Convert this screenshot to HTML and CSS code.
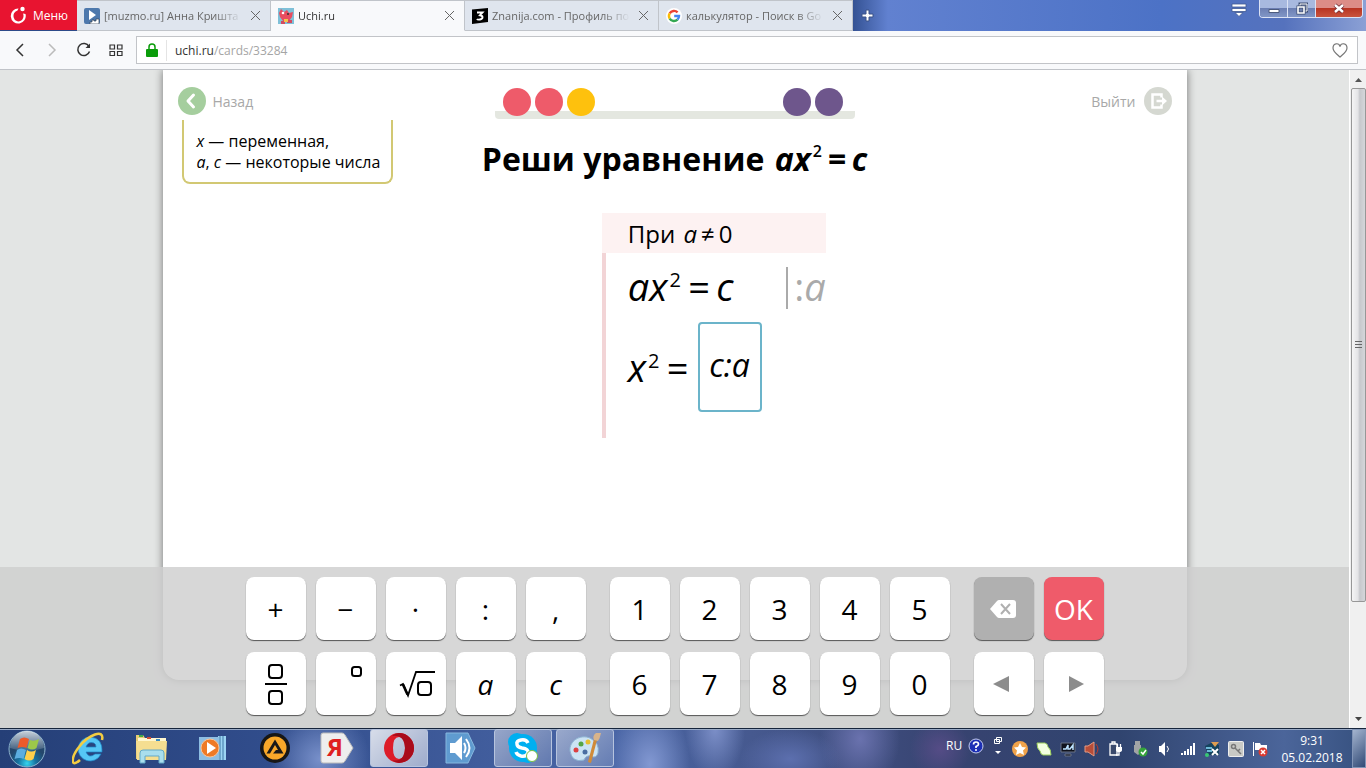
FILE: index.html
```html
<!DOCTYPE html>
<html lang="ru">
  <head>
    <meta charset="UTF-8" />
    <meta name="viewport" content="width=device-width, initial-scale=1.0" />
    <title>Uchi.ru</title>
    <link rel="stylesheet" href="styles.css">
  </head>
  <body>
    <header class="tab-bar">
      <button class="menu-btn">
        <svg width="18" height="18" viewBox="0 0 18 18"><path d="M9.500 2.500A7.500 7.500 0 1 0 16.500 8L14 7.500A5 5.500 0 1 1 8.500 4.500Z" fill="#fff"/><circle cx="13.500" cy="3" r="2.200" fill="#fff"/></svg>
        Меню
      </button>
      <div class="tab">
        <svg width="16" height="16" viewBox="0 0 16 16"><rect width="16" height="16" rx="2" fill="#4d78ac"/><path d="M5 2l7 5-7 5z" fill="#fff"/><path d="M6 16v-2h2v-2h2v1h2v-2h3v5z" fill="#fff" stroke="#345" stroke-width=".7"/></svg>
        <a href="#" class="tab-title">[muzmo.ru] Анна Кришта</a>
        <button class="tab-close" aria-label="Закрыть"><svg width="11" height="11" viewBox="0 0 11 11"><path d="M1 1l9 9M10 1L1 10"/></svg></button>
      </div>
      <div class="tab active">
        <svg width="16" height="16" viewBox="0 0 16 16"><rect width="16" height="16" fill="#7fc0d8"/><path d="M1 5l2-4 3 3 3-2 2 3 4-1-1 5-3 4H5L2 9z" fill="#e84c5f"/><path d="M3 13h4v3H3zM9 12h5v3H9z" fill="#d34b61"/><path d="M6 11h4v3H6z" fill="#f4c34c"/><circle cx="5" cy="5" r="1.300" fill="#fff"/><circle cx="10" cy="6" r="1" fill="#333"/></svg>
        <a href="#" class="tab-title">Uchi.ru</a>
        <button class="tab-close" aria-label="Закрыть"><svg width="11" height="11" viewBox="0 0 11 11"><path d="M1 1l9 9M10 1L1 10"/></svg></button>
      </div>
      <div class="tab">
        <svg width="16" height="16" viewBox="0 0 16 16"><path d="M0 1.500L16 0v14L0 16z" fill="#000"/><path d="M5 4.500h5.500L8 7.200Q10.500 7.500 10.500 9.300T8 11.500 5 11" fill="none" stroke="#fff" stroke-width="1.900"/></svg>
        <a href="#" class="tab-title">Znanija.com - Профиль по</a>
        <button class="tab-close" aria-label="Закрыть"><svg width="11" height="11" viewBox="0 0 11 11"><path d="M1 1l9 9M10 1L1 10"/></svg></button>
      </div>
      <div class="tab">
        <svg width="16" height="16" viewBox="0 0 16 16"><circle cx="8" cy="8" r="8" fill="#fff"/><g fill="none" stroke-width="2.400"><path d="M3.700 5.400A5 5 0 0 1 11.600 4.400" stroke="#ea4335"/><path d="M3.700 10.600a5 5 0 0 1 0-5.200" stroke="#fbbc05"/><path d="M11.500 11.600a5 5 0 0 1-7.800-1" stroke="#34a853"/><path d="M8.200 8H13a5 5 0 0 1-1.500 3.600" stroke="#4285f4"/></g></svg>
        <a href="#" class="tab-title">калькулятор - Поиск в Go</a>
        <button class="tab-close" aria-label="Закрыть"><svg width="11" height="11" viewBox="0 0 11 11"><path d="M1 1l9 9M10 1L1 10"/></svg></button>
      </div>
      <button class="new-tab" aria-label="Новая вкладка"><svg width="13" height="13" viewBox="0 0 13 13"><path d="M5 1h3v4h4v3H8v4H5V8H1V5h4z" fill="#fff" stroke="#3b5388"/></svg></button>
      <button class="tab-list" aria-label="Список вкладок"><svg width="16" height="14" viewBox="0 0 16 14"><path d="M1 1h14v3H1zM1 5.500h14v3H1zM4 9.500h8L8 13.500z" fill="#fff" stroke="#3f5892" stroke-width=".8"/></svg></button>
      <div class="window-buttons">
        <button aria-label="Свернуть"><svg width="12" height="14" viewBox="0 0 12 14"><path d="M1 7.500h10v3H1z" fill="#fff" stroke="#4c5b7e"/></svg></button>
        <button aria-label="Развернуть"><svg width="12" height="14" viewBox="0 0 12 14"><path d="M4 2h7v7H4z" fill="none" stroke="#3f4f72" stroke-width="3"/><path d="M4 2h7v7H4z" fill="none" stroke="#fff"/><path d="M2 5h6v6H2z" fill="#6e80ae" stroke="#3f4f72" stroke-width="3"/><path d="M2 5h6v6H2z" fill="none" stroke="#fff" stroke-width="1.600"/></svg></button>
        <button class="win-close" aria-label="Закрыть окно"><svg width="12" height="14" viewBox="0 0 12 14"><path d="M2 3l8 7M10 3l-8 7" stroke="#6b2730" stroke-width="4"/><path d="M2 3l8 7M10 3l-8 7" stroke="#fff" stroke-width="2.500"/></svg></button>
      </div>
    </header>

    <nav class="toolbar">
      <button class="tool" aria-label="Назад"><svg width="16" height="16" viewBox="0 0 16 16"><path d="M11 2L5 8l6 6" stroke="#333"/></svg></button>
      <button class="tool" aria-label="Вперёд"><svg width="16" height="16" viewBox="0 0 16 16"><path d="M5 2l6 6-6 6" stroke="#bbb"/></svg></button>
      <button class="tool" aria-label="Обновить"><svg width="16" height="16" viewBox="0 0 16 16"><path d="M13 4.500A6 6 0 1 0 13.500 9.500" stroke="#333"/><path d="M14 1.500v4.500H9.500z" fill="#333"/></svg></button>
      <button class="tool" aria-label="Экспресс-панель"><svg width="16" height="16" viewBox="0 0 16 16"><path d="M2 3h4.500v4H2zM9.500 3H14v4H9.500zM2 9.500h4.500v4H2zM9.500 9.500H14v4H9.500z" stroke="#333" stroke-width="1.200"/></svg></button>
      <div class="address">
        <svg class="lock" width="12" height="14" viewBox="0 0 12 14"><path d="M3 7V4a3 3 0 0 1 6 0v3" fill="none" stroke="#0a9c0a" stroke-width="1.500"/><rect x="0" y="6" width="12" height="8" rx="1" fill="#0a9c0a"/></svg>
        <label for="path">uchi.ru</label>
        <input id="path" type="text" value="/cards/33284" />
        <button class="heart" aria-label="В закладки"><svg width="16" height="15" viewBox="0 0 16 15"><path d="M8 3.500C7-.5 1-.2 1 5c0 4 5 7 7 9 2-2 7-5 7-9 0-5.200-6-5.500-7-1.500z" fill="none" stroke="#777" stroke-width="1.200"/></svg></button>
      </div>
    </nav>

    <main class="page">
      <div class="viewport">
        <section class="card">
          <div class="card-top">
            <a href="#" class="nav-link">
              <svg width="28" height="28" viewBox="0 0 28 28"><circle cx="14" cy="14" r="14" fill="#a5ce9e"/><path d="M15.500 8l-5.500 6 5.500 6" fill="none" stroke="#fff" stroke-width="3" stroke-linecap="round" stroke-linejoin="round"/></svg>
              Назад
            </a>
            <div class="progress">
              <span class="dot red"></span>
              <span class="dot red"></span>
              <span class="dot yellow"></span>
              <span class="dot purple first"></span>
              <span class="dot purple"></span>
            </div>
            <a href="#" class="nav-link exit">
              Выйти
              <svg width="28" height="28" viewBox="0 0 28 28"><circle cx="14" cy="14" r="14" fill="#d5d8d1"/><path d="M17.500 10.500V7.500H8.500v13h9v-3" fill="none" stroke="#fff" stroke-width="2.500"/><path d="M12.500 14H20" stroke="#fff" stroke-width="2.500"/><path d="M18 9.500l5 4.500-5 4.500z" fill="#fff"/></svg>
            </a>
          </div>
          <div class="task">
            <p class="hint"><i>x</i> — переменная,<br /><i>a</i>, <i>c</i> — некоторые числа</p>
            <h1>Реши уравнение <span class="formula"><i>ax</i><sup>2</sup>&thinsp;=&thinsp;<i>c</i></span></h1>
          </div>
          <div class="solution">
            <div class="condition">При <span class="formula"><i>a</i>&thinsp;≠&thinsp;0</span></div>
            <div class="steps">
              <div class="step">
                <span class="formula"><i>ax</i><sup>2</sup>&thinsp;=&thinsp;<i>c</i></span>
                <span class="operation">:<i>a</i></span>
              </div>
              <div class="step answer-step">
                <label class="formula" for="answer"><i>x</i><sup>2</sup>&thinsp;=</label>
                <input id="answer" class="answer" type="text" value="c:a" />
              </div>
            </div>
          </div>
        </section>

        <div class="keyboard">
          <div class="keys wide">
            <button>+</button>
            <button>−</button>
            <button>·</button>
            <button>:</button>
            <button>,</button>
            <button aria-label="Дробь"><svg width="24" height="44" viewBox="0 0 24 44"><g fill="none" stroke="#000" stroke-width="2"><rect x="5" y="3" width="13" height="13" rx="3"/><path d="M1 22h22"/><rect x="5" y="29" width="13" height="13" rx="3"/></g></svg></button>
            <button class="power" aria-label="Степень"><svg width="12" height="12" viewBox="0 0 12 12"><rect x="1" y="1" width="9" height="9" rx="2.500" fill="none" stroke="#000" stroke-width="2"/></svg></button>
            <button aria-label="Корень"><svg width="38" height="28" viewBox="0 0 38 28"><g fill="none" stroke="#000"><path d="M3 15.500l3-1.500 5 11.500 8-23.500h19" stroke-width="1.800"/><path d="M6 14.500l4.500 10" stroke-width="2.600"/><rect x="21" y="12" width="13" height="13" rx="3" stroke-width="2"/></g></svg></button>
            <button><i>a</i></button>
            <button><i>c</i></button>
          </div>
          <div class="keys wide">
            <button>1</button>
            <button>2</button>
            <button>3</button>
            <button>4</button>
            <button>5</button>
            <button>6</button>
            <button>7</button>
            <button>8</button>
            <button>9</button>
            <button>0</button>
          </div>
          <div class="keys">
            <button class="erase" aria-label="Стереть"><svg width="30" height="20" viewBox="0 0 30 20"><path d="M1 10l7-8q1-1 2-1h14q3 0 3 3v12q0 3-3 3H10q-1 0-2-1z" fill="#fff"/><path d="M12 5l9 10M21 5l-9 10" stroke="#b0b0b0" stroke-width="2"/></svg></button>
            <button class="ok">OK</button>
            <button aria-label="Влево"><svg width="24" height="18" viewBox="0 0 24 18"><path d="M17 1v16L1 9z" fill="#8c8c8c"/></svg></button>
            <button aria-label="Вправо"><svg width="24" height="18" viewBox="0 0 24 18"><path d="M7 1v16l15-8z" fill="#8c8c8c"/></svg></button>
          </div>
        </div>
      </div>
      <div class="scrollbar">
        <svg width="7" height="4" viewBox="0 0 7 4"><path d="M0 4l3.500-4L7 4z" fill="#555"/></svg>
        <div class="thumb"></div>
        <svg class="down" width="7" height="4" viewBox="0 0 7 4"><path d="M0 0l3.500 4L7 0z" fill="#444"/></svg>
      </div>
    </main>

    <footer class="taskbar">
      <button class="start" aria-label="Пуск"><svg width="38" height="38" viewBox="0 0 38 38"><defs><radialGradient id="orb" cy=".9"><stop offset="0" stop-color="#35d5ef"/><stop offset=".5" stop-color="#17729f"/><stop offset="1" stop-color="#24476c"/></radialGradient><linearGradient id="shine" x2="0" y2="1"><stop offset="0" stop-color="#fff" stop-opacity=".75"/><stop offset="1" stop-color="#fff" stop-opacity=".1"/></linearGradient></defs><circle cx="19" cy="19" r="18" fill="url(#orb)" stroke="#8eb4ce"/><path d="M2 18a17 17 0 0 1 34 0q-17 6-34 0z" fill="url(#shine)"/><path d="M12 9q4-3 9 0l-2.500 9q-4-2-9 0z" fill="#ed5a2a"/><path d="M22 10q4 2 9-1l-2.500 9q-4 3-9 0z" fill="#9cc84a"/><path d="M9 20q4-3 9 0l-2.500 9q-4-2-9 0z" fill="#5caee0"/><path d="M19 20q4 3 9 0l-2.500 9q-4 3-9 0z" fill="#ffd04b"/></svg></button>
      <div class="apps">
        <button aria-label="Internet Explorer"><svg width="34" height="34" viewBox="0 0 34 34"><path d="M18 6a12 12 0 1 0 11 17h-6q-6 5-9-2h16Q31 7 18 6m-4 10q2-6 8-4 2 1 2 4z" fill="#55c6f5" stroke="#1d84c6" stroke-width=".7"/><path d="M8 29C-2 38-1 26 7 16 16 4 33-3 30 9" fill="none" stroke="#f3cc42" stroke-width="2.500"/></svg></button>
        <button aria-label="Проводник"><svg width="34" height="34" viewBox="0 0 34 34"><path d="M2 4h7l2 3h9l2 3h10v18H2z" fill="#e8cd75"/><path d="M4 7h28v4H4z" fill="#fff7cf"/><path d="M2 10h31l-1 19H3z" fill="#f5de91"/><path d="M5 4h4v2H5z" fill="#3fa94a"/><path d="M13 6h4v2h-4z" fill="#d14e35"/><path d="M22 8h4v2h-4z" fill="#388bc2"/><path d="M6 32V22q0-3 3-3h18q3 0 3 3v10h-5v-7H11v7z" fill="#a9deed" stroke="#62a9c8"/></svg></button>
        <button aria-label="Проигрыватель"><svg width="30" height="30" viewBox="0 0 30 30"><path d="M20 3h8v24h-8z" fill="#9cd4f3"/><path d="M25 3v24M22 3v24" stroke="#3e78a5"/><path d="M1 4h20v23H1z" fill="#8ebee2"/><circle cx="12" cy="15" r="9" fill="#ee7a26" stroke="#fac396"/><path d="M9 9l9 6-9 6z" fill="#fff"/></svg></button>
        <button aria-label="AIMP"><svg width="32" height="32" viewBox="0 0 32 32"><circle cx="16" cy="16" r="15" fill="#171717"/><circle cx="16" cy="16" r="11.500" fill="#f9a82a"/><path d="M16 7.500l8.500 14H14l3-3.500h2l-3-5-5 8.500H7.500z" fill="#1a1a1a"/></svg></button>
        <button aria-label="Яндекс"><svg width="34" height="34" viewBox="0 0 34 34"><path d="M3 2h19q2 0 3 2l8 13-8 13q-1 2-3 2H3q-2 0-2-2V4q0-2 2-2z" fill="#eee" stroke="#bbb"/><text x="7" y="25" class="ya">Я</text></svg></button>
        <button class="open current" aria-label="Opera"><svg width="32" height="32" viewBox="0 0 32 32"><path d="M16 1a15 15 0 1 0 0 30 15 15 0 0 0 0-30m0 4q6 0 6 11t-6 11-6-11 6-11" fill="#dd1c29"/><path d="M16 1a15 15 0 0 1 0 30q-4 0-7-3 12 3 13-12Q21 2 9 4q3-3 7-3z" fill="#a90c1b"/></svg></button>
        <button aria-label="Звук"><svg width="34" height="34" viewBox="0 0 34 34"><path d="M2 2h22l7 15-7 15H2z" fill="#5f9bd0" stroke="#86b7de"/><path d="M6 12h5l7-7v24l-7-7H6z" fill="#fff"/><path d="M20 12q3 5 0 10M22 8q7 9 0 18" fill="none" stroke="#fff" stroke-width="2"/></svg></button>
        <button class="open" aria-label="Skype"><svg width="34" height="34" viewBox="0 0 34 34"><circle cx="11" cy="11" r="9" fill="#00aff0"/><circle cx="22" cy="23" r="9" fill="#00aff0"/><circle cx="17" cy="17" r="14" fill="#00aff0"/><path d="M22 12Q20 8 15 9t-4 4q0 3 5 4 7 1 6 5-2 4-7 3-4-1-5-4" fill="none" stroke="#fff" stroke-width="3.500"/><circle cx="26" cy="25" r="5.500" fill="#fff" stroke="#7bc142"/></svg></button>
        <button class="open" aria-label="Paint"><svg width="34" height="34" viewBox="0 0 34 34"><path d="M2 20C1 10 12 3 22 7q10 5 8 15-2 6-7 3-5-1-7 4-12 3-14-9z" fill="#cbe3f4" stroke="#8eb4d2"/><circle cx="8" cy="19" r="2.500" fill="#db4143"/><circle cx="13" cy="13" r="2.500" fill="#55a545"/><circle cx="20" cy="11" r="2.500" fill="#e6be30"/><circle cx="17" cy="21" r="2.500" fill="#496da2"/><path d="M29 9l-6 23-3-1 6-23z" fill="#d08b39"/><path d="M26 9q-2-4 2-7l5 0q-1 5-3 8z" fill="#d9b48b"/></svg></button>
      </div>
      <div class="tray">
        <div class="lang-bar">
          <span class="lang">RU</span>
          <button aria-label="Справка"><svg width="16" height="16" viewBox="0 0 16 16"><circle cx="8" cy="8" r="7" fill="#1c2fb5" stroke="#c4ccec"/><path d="M5.500 6.500Q5.500 4 8 4t2.500 2.200Q10.500 7.500 8 8.500V10" fill="none" stroke="#fff" stroke-width="1.700"/><circle cx="8" cy="12" r="1" fill="#fff"/></svg></button>
          <div class="lang-tools">
            <svg width="8" height="7" viewBox="0 0 8 7"><path d="M2.500.5h5v4h-5zM.5 2.500h5v4h-5z" fill="#34466e" stroke="#fff"/></svg>
            <svg width="6" height="3" viewBox="0 0 6 3"><path d="M0 0h6L3 3z" fill="#fff"/></svg>
          </div>
        </div>
        <button aria-label="Избранное"><svg width="16" height="16" viewBox="0 0 16 16"><circle cx="8" cy="8" r="8" fill="#f0a24a"/><path d="M8 2l2 4 4 .5-3 3 1 4.500-4-2-4 2 1-4.500-3-3L6 6z" fill="#fff"/></svg></button>
        <button aria-label="Лист"><svg width="16" height="16" viewBox="0 0 16 16"><path d="M1 2h8q3 1 3 4 3 2 3 8H7Q5 14 4 10 1 8 1 2z" fill="#f2ffe0" stroke="#9cce5d"/></svg></button>
        <button aria-label="Монитор"><svg width="16" height="16" viewBox="0 0 16 16"><path d="M1 2h14v9H1zM5 13h6v2H5z" fill="#10131d" stroke="#697386"/><path d="M3 8h3l2-4v4h2l3-4v5" fill="none" stroke="#bde3ff" stroke-width="1.500"/></svg></button>
        <button aria-label="Звуковая карта"><svg width="16" height="16" viewBox="0 0 16 16"><path d="M1 5h3l6-4v14l-6-4H1z" fill="#b84d38" stroke="#e69b83"/><path d="M12 3q4 5 0 10" fill="none" stroke="#c33a29"/></svg></button>
        <button aria-label="Питание"><svg width="16" height="16" viewBox="0 0 16 16"><path d="M2 3h7v11H2zM4 1h3v2H4z" fill="#39496c" stroke="#fff" stroke-width="1.300"/><path d="M8 6h6v3q0 2-3 2t-3-2z" fill="#fff"/><path d="M9.500 3v3M12.500 3v3M11 11v3H8" fill="none" stroke="#fff" stroke-width="1.300"/></svg></button>
        <button aria-label="Извлечь"><svg width="16" height="16" viewBox="0 0 16 16"><path d="M3 0h5v4H3zM2 4h7v7l-3 3-4-3z" fill="#a1a4a6"/><circle cx="11" cy="11" r="4.500" fill="#34a43b"/><path d="M9 11l2 2 3-4" fill="none" stroke="#fff" stroke-width="1.500"/></svg></button>
        <button aria-label="Громкость"><svg width="16" height="16" viewBox="0 0 16 16"><path d="M3 5h2l4-4v14l-4-4H3z" fill="#fff"/><path d="M11 5q3 3 0 6" fill="none" stroke="#fff"/></svg></button>
        <button aria-label="Сеть"><svg width="16" height="16" viewBox="0 0 16 16"><path d="M1 12h2v2H1zM4 10h2v4H4zM7 8h2v6H7zM10 5h2v9h-2zM13 2h2v12h-2z" fill="#fff"/></svg></button>
        <button aria-label="Модем"><svg width="16" height="16" viewBox="0 0 16 16"><path d="M1 5l8-4 6 3v10H4z" fill="#14435e"/><path d="M2 7h6M3 10h5" stroke="#6cb7d6" stroke-width="2"/><path d="M7 1h8l-4 5z" fill="#dd9d52"/><path d="M8 8l6 6M14 8l-6 6" stroke="#fff" stroke-width="2"/><circle cx="3" cy="14" r="2" fill="#39c874"/></svg></button>
        <button aria-label="Ключ"><svg width="16" height="16" viewBox="0 0 16 16"><rect x=".5" y=".5" width="15" height="15" rx="1" fill="#c9cac6" stroke="#eee"/><circle cx="5.500" cy="5.500" r="2" fill="none" stroke="#777" stroke-width="1.500"/><path d="M7 7l6 6M10 10l2-2" stroke="#777" stroke-width="1.500"/></svg></button>
        <button aria-label="Центр поддержки"><svg width="16" height="16" viewBox="0 0 16 16"><path d="M1.500 1v14" stroke="#fff"/><path d="M3 2h5l1 2h6v7H9L8 9H3z" fill="#fff"/><circle cx="11" cy="11" r="4.500" fill="#d93a31"/><path d="M9 9l4 4M13 9l-4 4" stroke="#fff" stroke-width="1.500"/></svg></button>
        <time class="clock">9:31<br />05.02.2018</time>
        <button class="show-desktop" aria-label="Свернуть все окна"></button>
      </div>
    </footer>
  </body>
</html>
```

FILE: styles.css
```css
* {
  box-sizing: border-box;
}
body {
  display: flex;
  flex-direction: column;
  height: 100vh;
  margin: 0;
  font-family: "Open Sans", "Noto Sans", sans-serif;
  color: #000;
}
button {
  display: flex;
  align-items: center;
  justify-content: center;
  padding: 0;
  border: none;
  background: none;
  font-family: inherit;
  cursor: pointer;
}
a {
  text-decoration: none;
}
svg {
  flex: none;
}

/* browser window */
.tab-bar {
  display: flex;
  height: 31px;
  background: linear-gradient(90deg, #2d4a89 62%, #6181d0 65%, #4c72c6 85%, #5572bd 94%, #8ba0d5);
}
.menu-btn {
  width: 77px;
  height: 30px;
  gap: 6px;
  background-color: #e81430;
  color: #fff;
  font-size: 12px;
}
.tab {
  display: flex;
  align-items: center;
  width: 194px;
  padding: 0 5px 0 7px;
  gap: 4px;
  border: 1px solid #c0c4ca;
  border-left: none;
  background-color: #dfe5ee;
}
.tab.active {
  border-bottom-color: #f8f9fb;
  background-color: #f8f9fb;
}
.tab-title {
  flex: 1;
  overflow: hidden;
  color: #666;
  font-size: 11px;
  white-space: nowrap;
  mask-image: linear-gradient(90deg, #000 80%, transparent);
}
.active .tab-title {
  color: #333;
}
.tab-close {
  width: 19px;
  height: 20px;
}
.tab-close svg {
  fill: none;
  stroke: #666;
}
.new-tab {
  width: 29px;
}
.tab-list {
  width: 20px;
  height: 20px;
  margin-left: auto;
}
.window-buttons {
  display: flex;
  height: 18px;
  margin: 0 3px 0 10px;
  border: 1px solid #dbe2f4;
  border-top: none;
  border-radius: 0 0 4px 4px;
  overflow: hidden;
}
.window-buttons button {
  width: 28px;
  border-right: 1px solid #dbe2f4;
  background: linear-gradient(#a8b9df 45%, #6c7fb3 50%, #8196c6);
}
.window-buttons .win-close {
  width: 46px;
  border-right: none;
  background: linear-gradient(#dc8d87 45%, #b83523 50%, #c9533d);
}
.toolbar {
  display: flex;
  align-items: center;
  height: 39px;
  padding: 0 8px 0 4px;
  border-bottom: 1px solid #c0c3c8;
  background-color: #f8f9fb;
}
.tool {
  width: 32px;
  height: 28px;
}
.tool svg {
  fill: none;
  stroke-width: 1.5;
}
.address {
  display: flex;
  flex: 1;
  align-items: center;
  height: 28px;
  margin-left: 4px;
  padding: 0 9px;
  border: 1px solid #c2c4c8;
  background-color: #fff;
  font-size: 12px;
}
.address label {
  margin-left: 8px;
  padding: 2px 0 2px 8px;
  border-left: 1px solid #e4e4e4;
  color: #333;
}
.address input {
  flex: 1;
  padding: 0;
  border: none;
  outline: none;
  color: #a5a5a5;
  font: inherit;
}

/* lesson page */
.page {
  display: flex;
  flex: 1;
  min-height: 0;
}
.viewport {
  position: relative;
  flex: 1;
  overflow: hidden;
  background-color: #e3e5e4;
}
.card {
  max-width: 1024px;
  height: calc(100% - 48px);
  margin: 0 auto;
  border-radius: 0 0 16px 16px;
  background-color: #fff;
  box-shadow: 0 0 8px rgba(0, 0, 0, 0.5);
}
.card-top {
  display: flex;
  justify-content: space-between;
  height: 50px;
  padding: 17px 15px 0;
}
.nav-link {
  display: flex;
  align-items: center;
  width: 120px;
  height: 28px;
  gap: 7px;
  color: #a8a8a8;
  font-size: 14px;
}
.exit {
  justify-content: flex-end;
  gap: 8px;
}
.progress {
  display: flex;
  width: 360px;
  height: 32px;
  padding: 1px 12px 0 8px;
  gap: 4px;
  background: linear-gradient(#e4e7e0, #e4e7e0) bottom / 100% 8px no-repeat;
  border-radius: 4px;
}
.dot {
  width: 28px;
  height: 28px;
  border-radius: 50%;
}
.red {
  background-color: #ee5b6a;
}
.yellow {
  background-color: #fec10d;
}
.purple {
  background-color: #6e568c;
}
.first {
  margin-left: auto;
}
.task {
  display: grid;
  grid-template-columns: 1fr auto 1fr;
  padding: 0 19px;
}
.hint {
  justify-self: start;
  height: 64px;
  margin: 0;
  padding: 11px 11px 0 13px;
  border: 2px solid #d2c873;
  border-top: none;
  border-radius: 0 0 8px 8px;
  font-size: 16px;
  line-height: 21px;
  white-space: nowrap;
}
h1 {
  margin: 0;
  padding-top: 17px;
  font-size: 32px;
  line-height: 44px;
  white-space: nowrap;
}
h1 .formula {
  margin-left: 2px;
}
.formula sup {
  margin: 0 1px 0 2px;
  font-size: 20px;
  line-height: 0;
  vertical-align: 14px;
}
h1 .formula sup {
  font-size: 16px;
  font-weight: 600;
  vertical-align: 14px;
}
.solution {
  width: 224px;
  margin: 29px 0 0 42.9%;
}
.condition {
  height: 40px;
  padding-left: 26px;
  background-color: #fdf2f2;
  font-size: 24px;
  line-height: 42px;
}
.condition .formula {
  margin-left: 2px;
}
.steps {
  height: 185px;
  padding-left: 22px;
  border-left: 4px solid #f2d4d6;
}
.step {
  display: flex;
  align-items: flex-start;
  justify-content: space-between;
  height: 69px;
  padding-top: 14px;
  font-size: 38px;
  line-height: 38px;
}
.operation {
  height: 42px;
  padding-left: 6px;
  border-left: 2px solid #aaa;
  color: #aaa;
}
.answer-step {
  align-items: center;
  justify-content: flex-start;
  height: 90px;
  padding-top: 0;
  gap: 9px;
}
.answer {
  width: 64px;
  height: 90px;
  padding: 0 0 6px;
  border: 2px solid #6bb4ca;
  border-radius: 4px;
  outline: none;
  font-family: inherit;
  font-size: 32px;
  font-style: italic;
  text-align: center;
}

/* keyboard over the bottom of the lesson */
.keyboard {
  position: absolute;
  right: 0;
  bottom: 0;
  left: 0;
  display: flex;
  justify-content: center;
  padding: 10px 0 13px;
  gap: 24px;
  background-color: rgba(206, 206, 206, 0.82);
}
.keys {
  display: grid;
  grid-template-columns: repeat(2, 60px);
  grid-auto-rows: 63px;
  gap: 12px 10px;
}
.keys.wide {
  grid-template-columns: repeat(5, 60px);
}
.keys button {
  border-radius: 8px;
  background-color: #fff;
  box-shadow: 0 1px 1px #555;
  color: #000;
  font-size: 28px;
}
.keys .power {
  align-items: flex-start;
  padding: 14px 0 0 22px;
}
.keys .erase {
  background-color: #b0b0b0;
}
.keys .ok {
  background-color: #ef5b6a;
  color: #fff;
}
.scrollbar {
  display: flex;
  flex-direction: column;
  align-items: center;
  width: 17px;
  padding: 8px 0 7px;
  border-left: 1px solid #fff;
  background-color: #f0f0f0;
}
.thumb {
  width: 15px;
  height: 80%;
  margin-top: 6px;
  border: 1px solid #979797;
  border-radius: 2px;
  background:
    repeating-linear-gradient(#666 0 1px, transparent 1px 3px) center / 7px 8px no-repeat,
    linear-gradient(90deg, #f5f5f5, #e4e4e6 45%, #c7c8cc 60%, #d5d6da);
}
.down {
  margin-top: auto;
}

/* desktop taskbar */
.taskbar {
  display: flex;
  height: 40px;
  border-top: 1px solid #16253c;
  background:
    radial-gradient(ellipse 50px 50px at 320px 30px, #7890ca, transparent),
    radial-gradient(ellipse 40px 60px at 650px 35px, #8298d2, transparent),
    radial-gradient(ellipse 30px 50px at 715px 0, #7c8fc8, transparent),
    radial-gradient(ellipse 50px 30px at 790px 30px, #5c6fae, transparent),
    radial-gradient(ellipse 40px 50px at 860px 10px, #6a72ae, transparent),
    radial-gradient(ellipse 30px 30px at 940px 20px, #554c86, transparent),
    linear-gradient(90deg, #253f77, #314d8c 20%, #4a66a6 45%, #46598f 55%, #374370 70%, #30446f 82%, #4b659a 94%, #36517f);
  box-shadow: inset 0 1px #9aabc7;
}
.start {
  width: 54px;
}
.apps {
  display: flex;
  margin-left: 6px;
  gap: 4px;
}
.apps button {
  width: 58px;
  height: 38px;
}
.apps .open {
  border: 1px solid #b7c4de;
  border-radius: 3px;
  background: linear-gradient(135deg, rgba(255, 255, 255, 0.45), rgba(255, 255, 255, 0.15));
}
.apps .current {
  background: linear-gradient(135deg, rgba(255, 255, 255, 0.8), rgba(255, 255, 255, 0.5));
}
.ya {
  fill: #df2020;
  font-size: 24px;
  font-family: "Open Sans", sans-serif;
  font-weight: bold;
}
.tray {
  display: flex;
  align-items: center;
  margin-left: auto;
  color: #fff;
  font-size: 12px;
}
.tray button {
  width: 24px;
  height: 24px;
}
.lang-bar {
  display: flex;
  align-items: center;
  padding-bottom: 6px;
}
.lang {
  width: 18px;
}
.lang-tools {
  display: flex;
  flex-direction: column;
  align-items: center;
  width: 20px;
  gap: 7px;
}
.clock {
  width: 80px;
  line-height: 17px;
  text-align: center;
}
.tray .show-desktop {
  width: 14px;
  height: 39px;
  border: 1px solid #8194b6;
  background: linear-gradient(135deg, #a4b4cf, #314a76);
}
```
